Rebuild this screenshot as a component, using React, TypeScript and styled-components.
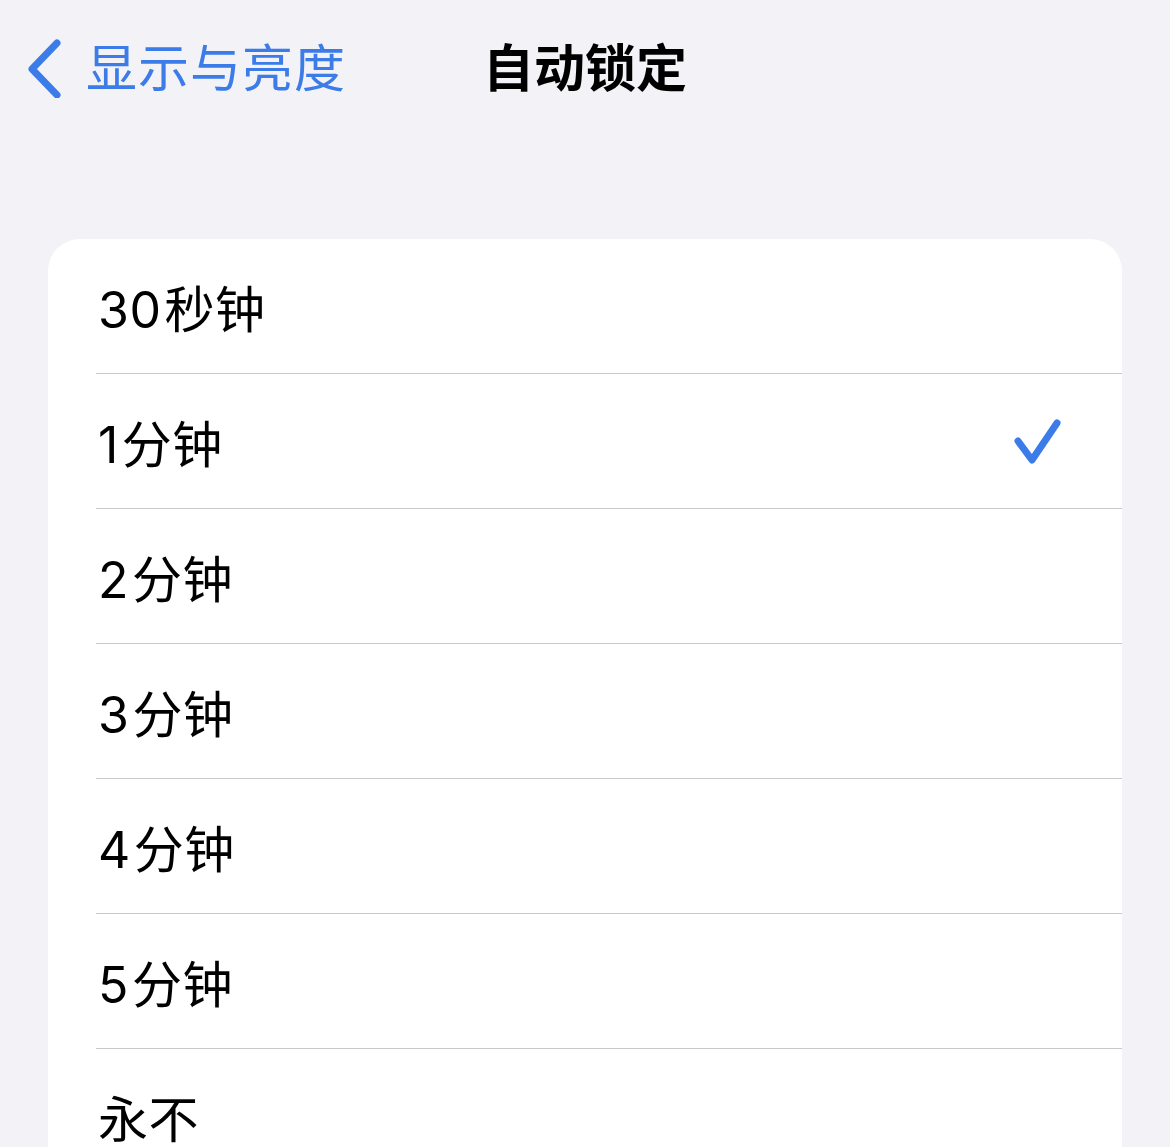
import React from 'react'
import styled, { createGlobalStyle } from 'styled-components'

const GlobalStyle = createGlobalStyle`
	html, body {
		margin: 0;
		padding: 0;
		background: #f2f2f7;
	}
	body {
		font-family: 'Inter', 'Noto Sans CJK SC', sans-serif;
		-webkit-font-smoothing: antialiased;
	}
`

const BLUE = '#3b7ce9'

const StyledPage = styled.div`
	height: 1147px;
	overflow: hidden;
	background: #f2f2f7;
`
const StyledNavBar = styled.div`
	position: relative;
	display: flex;
	align-items: center;
	justify-content: center;
	height: 130px;
`
const StyledBackButton = styled.div`
	position: absolute;
	left: 24px;
	top: 0;
	bottom: 0;
	display: flex;
	align-items: center;
	gap: 22px;
	color: ${BLUE};
	font-size: 51px;
	font-weight: 400;
	letter-spacing: 1px;
`
const StyledChevron = styled.svg`
	margin-top: 6px;
`
const StyledTitle = styled.div`
	font-size: 51px;
	font-weight: 700;
	color: #000;
`
const StyledCard = styled.div`
	margin: 109px 48px 0 48px;
	background: #fff;
	border-radius: 32px;
	overflow: hidden;
`
const StyledRow = styled.div`
	display: flex;
	padding-left: 48px;
`
const StyledRowInner = styled.div<{ isLast: boolean }>`
	flex: 1;
	display: flex;
	align-items: center;
	justify-content: space-between;
	height: 134px;
	padding-right: 58px;
	border-bottom: ${(props) => (props.isLast ? 'none' : '1px solid #c8c7cc')};
`
const StyledLabel = styled.span`
	padding-left: 2px;
	font-size: 50px;
	color: #000;
	letter-spacing: 0.5px;
`
const StyledNumber = styled.span`
	margin-right: 3px;
`

const options = ['30秒钟', '1分钟', '2分钟', '3分钟', '4分钟', '5分钟', '永不']
const selected = '1分钟'

const Chevron = () => (
	<StyledChevron width="40" height="60" viewBox="0 0 40 60">
		<path
			d="M33 5 L8 31 L33 57"
			fill="none"
			stroke={BLUE}
			strokeWidth="7"
			strokeLinecap="round"
			strokeLinejoin="round"
		/>
	</StyledChevron>
)

const Check = () => (
	<svg width="52" height="50" viewBox="0 0 52 50">
		<path
			d="M6 25 L20 44 L45 7"
			fill="none"
			stroke={BLUE}
			strokeWidth="7"
			strokeLinecap="round"
			strokeLinejoin="round"
		/>
	</svg>
)

const Label = ({ text }: { text: string }) => {
	const match = text.match(/^(\d+)(.*)$/)
	if (!match) return <StyledLabel>{text}</StyledLabel>
	return (
		<StyledLabel>
			<StyledNumber>{match[1]}</StyledNumber>
			{match[2]}
		</StyledLabel>
	)
}

export default function App() {
	return (
		<StyledPage>
			<GlobalStyle />
			<StyledNavBar>
				<StyledBackButton>
					<Chevron />
					<span>显示与亮度</span>
				</StyledBackButton>
				<StyledTitle>自动锁定</StyledTitle>
			</StyledNavBar>
			<StyledCard>
				{options.map((label, i) => (
					<StyledRow key={label}>
						<StyledRowInner isLast={i === options.length - 1}>
							<Label text={label} />
							{label === selected && <Check />}
						</StyledRowInner>
					</StyledRow>
				))}
			</StyledCard>
		</StyledPage>
	)
}
